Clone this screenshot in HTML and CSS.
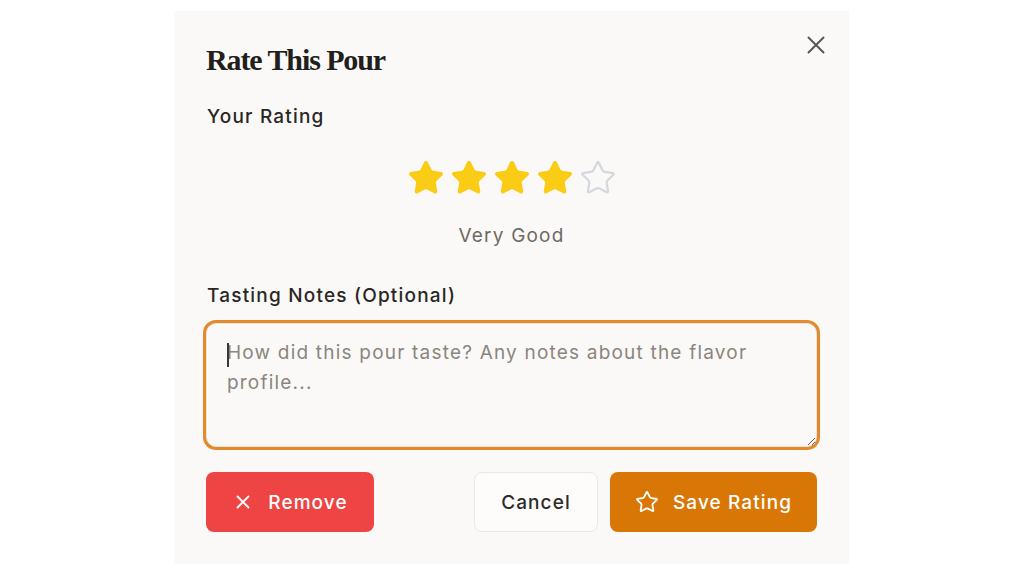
FILE: index.html
```html
<!DOCTYPE html>
<html lang="en">
<head>
<meta charset="utf-8">
<title>Rate This Pour</title>
<link rel="stylesheet" href="styles.css">
</head>
<body>
<div class="modal">
  <button class="close" aria-label="Close">
    <svg viewBox="0 0 24 24" width="30" height="30" fill="none" stroke="#555" stroke-width="1.5" stroke-linecap="round"><path d="M18 6 6 18M6 6l12 12"/></svg>
  </button>
  <h2 class="title">Rate This Pour</h2>
  <div class="label">Your Rating</div>
  <div class="stars">
    <svg class="star on" viewBox="0 0 24 24"><path d="M11.525 2.295a.53.53 0 0 1 .95 0l2.31 4.679a2.123 2.123 0 0 0 1.595 1.16l5.166.756a.53.53 0 0 1 .294.904l-3.736 3.638a2.123 2.123 0 0 0-.611 1.878l.882 5.14a.53.53 0 0 1-.771.56l-4.618-2.428a2.122 2.122 0 0 0-1.973 0L6.396 21.01a.53.53 0 0 1-.77-.56l.881-5.139a2.122 2.122 0 0 0-.611-1.879L2.16 9.795a.53.53 0 0 1 .294-.906l5.165-.755a2.122 2.122 0 0 0 1.597-1.16z"/></svg>
    <svg class="star on" viewBox="0 0 24 24"><path d="M11.525 2.295a.53.53 0 0 1 .95 0l2.31 4.679a2.123 2.123 0 0 0 1.595 1.16l5.166.756a.53.53 0 0 1 .294.904l-3.736 3.638a2.123 2.123 0 0 0-.611 1.878l.882 5.14a.53.53 0 0 1-.771.56l-4.618-2.428a2.122 2.122 0 0 0-1.973 0L6.396 21.01a.53.53 0 0 1-.77-.56l.881-5.139a2.122 2.122 0 0 0-.611-1.879L2.16 9.795a.53.53 0 0 1 .294-.906l5.165-.755a2.122 2.122 0 0 0 1.597-1.16z"/></svg>
    <svg class="star on" viewBox="0 0 24 24"><path d="M11.525 2.295a.53.53 0 0 1 .95 0l2.31 4.679a2.123 2.123 0 0 0 1.595 1.16l5.166.756a.53.53 0 0 1 .294.904l-3.736 3.638a2.123 2.123 0 0 0-.611 1.878l.882 5.14a.53.53 0 0 1-.771.56l-4.618-2.428a2.122 2.122 0 0 0-1.973 0L6.396 21.01a.53.53 0 0 1-.77-.56l.881-5.139a2.122 2.122 0 0 0-.611-1.879L2.16 9.795a.53.53 0 0 1 .294-.906l5.165-.755a2.122 2.122 0 0 0 1.597-1.16z"/></svg>
    <svg class="star on" viewBox="0 0 24 24"><path d="M11.525 2.295a.53.53 0 0 1 .95 0l2.31 4.679a2.123 2.123 0 0 0 1.595 1.16l5.166.756a.53.53 0 0 1 .294.904l-3.736 3.638a2.123 2.123 0 0 0-.611 1.878l.882 5.14a.53.53 0 0 1-.771.56l-4.618-2.428a2.122 2.122 0 0 0-1.973 0L6.396 21.01a.53.53 0 0 1-.77-.56l.881-5.139a2.122 2.122 0 0 0-.611-1.879L2.16 9.795a.53.53 0 0 1 .294-.906l5.165-.755a2.122 2.122 0 0 0 1.597-1.16z"/></svg>
    <svg class="star off" viewBox="0 0 24 24"><path d="M11.525 2.295a.53.53 0 0 1 .95 0l2.31 4.679a2.123 2.123 0 0 0 1.595 1.16l5.166.756a.53.53 0 0 1 .294.904l-3.736 3.638a2.123 2.123 0 0 0-.611 1.878l.882 5.14a.53.53 0 0 1-.771.56l-4.618-2.428a2.122 2.122 0 0 0-1.973 0L6.396 21.01a.53.53 0 0 1-.77-.56l.881-5.139a2.122 2.122 0 0 0-.611-1.879L2.16 9.795a.53.53 0 0 1 .294-.906l5.165-.755a2.122 2.122 0 0 0 1.597-1.16z"/></svg>
  </div>
  <div class="rating-text">Very Good</div>
  <div class="label notes-label">Tasting Notes (Optional)</div>
  <div class="field">
    <textarea class="notes" placeholder="How did this pour taste? Any notes about the flavor profile..."></textarea>
    <span class="caret"></span>
  </div>
  <div class="actions">
    <button class="btn remove">
      <svg viewBox="0 0 24 24" width="22" height="22" fill="none" stroke="#fff" stroke-width="2" stroke-linecap="round"><path d="M18 6 6 18M6 6l12 12"/></svg>
      <span>Remove</span>
    </button>
    <div class="spacer"></div>
    <button class="btn cancel">Cancel</button>
    <button class="btn save">
      <svg viewBox="0 0 24 24" width="24" height="24" fill="none" stroke="#fff" stroke-width="1.8" stroke-linejoin="round"><path d="M11.525 2.295a.53.53 0 0 1 .95 0l2.31 4.679a2.123 2.123 0 0 0 1.595 1.16l5.166.756a.53.53 0 0 1 .294.904l-3.736 3.638a2.123 2.123 0 0 0-.611 1.878l.882 5.14a.53.53 0 0 1-.771.56l-4.618-2.428a2.122 2.122 0 0 0-1.973 0L6.396 21.01a.53.53 0 0 1-.77-.56l.881-5.139a2.122 2.122 0 0 0-.611-1.879L2.16 9.795a.53.53 0 0 1 .294-.906l5.165-.755a2.122 2.122 0 0 0 1.597-1.16z"/></svg>
      <span>Save Rating</span>
    </button>
  </div>
</div>
</body>
</html>
```
FILE: styles.css
```css
* { box-sizing: border-box; }
html, body { margin: 0; padding: 0; background: #ffffff; }
body { font-family: Inter, "Noto Sans", sans-serif; color: #2a2623; }

.modal {
  position: relative;
  width: 675px;
  height: 553px;
  margin: 11px 0 0 174px;
  background: #faf9f7;
  padding: 31px 32px 0 32px;
  display: flex;
  flex-direction: column;
}

.close {
  position: absolute;
  top: 19px;
  right: 18px;
  width: 30px;
  height: 30px;
  padding: 0;
  border: 0;
  background: transparent;
  display: flex;
}

.title {
  margin: 0;
  font-family: "Liberation Serif", "DejaVu Serif", serif;
  font-weight: 700;
  font-size: 30px;
  letter-spacing: -1.1px;
  line-height: 36px;
  color: #221e1b;
}

.label {
  margin-top: 27px;
  font-size: 19px;
  font-weight: 500;
  line-height: 24px;
  color: #2a2623;
  letter-spacing: 1.2px;
  padding-left: 1px;
}

.stars {
  margin-top: 30px;
  display: flex;
  justify-content: center;
  gap: 5px;
  height: 38px;
}
.star { width: 38px; height: 38px; }
.star.on path { fill: #facc15; stroke: #facc15; stroke-width: 1.5; stroke-linejoin: round; }
.star.off path { fill: none; stroke: #d4d7de; stroke-width: 1.4; stroke-linejoin: round; }

.rating-text {
  margin-top: 27px;
  text-align: center;
  font-size: 19px;
  line-height: 24px;
  color: #6f6963;
  letter-spacing: 1.2px;
}

.notes-label { margin-top: 36px; }

.field {
  position: relative;
  margin-top: 15px;
}
.notes {
  display: block;
  width: 100%;
  height: 124px;
  resize: vertical;
  border: 1px solid #e6e2dd;
  border-radius: 10px;
  box-shadow: 0 0 0 3px #e38a2c;
  background: #faf9f7;
  padding: 14px 20px;
  font-family: Inter, "Noto Sans", sans-serif;
  font-size: 19px;
  line-height: 30px;
  letter-spacing: 1.2px;
  color: #2a2623;
  outline: none;
}
.notes::placeholder { color: #8c857e; opacity: 1; }
.caret {
  position: absolute;
  left: 21px;
  top: 20px;
  width: 2px;
  height: 24px;
  background: #3a3633;
}

.actions {
  margin-top: 25px;
  display: flex;
  gap: 12px;
}
.spacer { flex: 1; }
.btn {
  flex: none;
  height: 60px;
  border-radius: 8px;
  padding: 0;
  display: flex;
  align-items: center;
  justify-content: center;
  gap: 14px;
  font-family: Inter, "Noto Sans", sans-serif;
  font-size: 19px;
  font-weight: 500;
  letter-spacing: 1.1px;
  border: 0;
}
.remove { width: 168px; background: #ef4444; color: #ffffff; }
.cancel { width: 124px; background: #fdfcfb; color: #2e2a27; border: 1px solid #ebe7e2; }
.save { width: 207px; background: #d97706; color: #ffffff; }
```
